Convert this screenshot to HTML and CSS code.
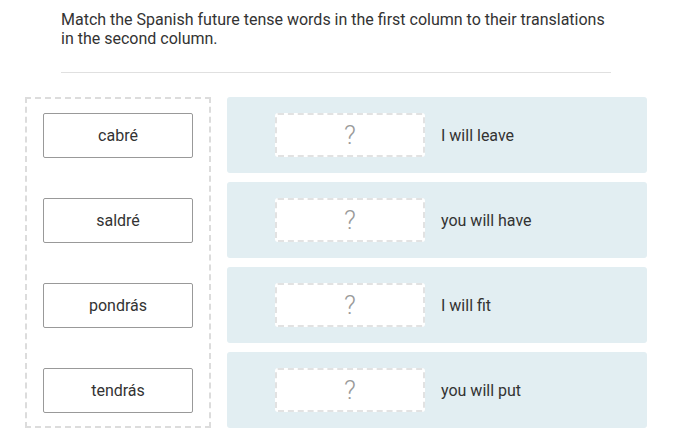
FILE: index.html
```html
<!DOCTYPE html>
<html lang="en">
  <head>
    <meta charset="UTF-8" />
    <meta name="viewport" content="width=device-width, initial-scale=1.0" />
    <title>Matching Question</title>
    <link rel="stylesheet" href="styles.css">
  </head>
  <body>
    <div class="question">
      <p class="prompt">
        Match the Spanish future tense words in the first column to their translations
        in the second column.
      </p>
      <hr class="divider" />
    </div>

    <div class="match-area">
      <div class="word-bank">
        <div class="word-card">cabré</div>
        <div class="word-card">saldré</div>
        <div class="word-card">pondrás</div>
        <div class="word-card">tendrás</div>
      </div>

      <ul class="target-list">
        <li class="target-row">
          <div class="drop-zone">?</div>
          <span class="target-label">I will leave</span>
        </li>
        <li class="target-row">
          <div class="drop-zone">?</div>
          <span class="target-label">you will have</span>
        </li>
        <li class="target-row">
          <div class="drop-zone">?</div>
          <span class="target-label">I will fit</span>
        </li>
        <li class="target-row">
          <div class="drop-zone">?</div>
          <span class="target-label">you will put</span>
        </li>
      </ul>
    </div>
  </body>
</html>
```

FILE: styles.css
```css
body {
  font-family: Roboto, "Liberation Sans", sans-serif;
  background-color: #fff;
  color: #333;
  margin: 0;
}

.question {
  padding: 10px 65px 0 61px;
}

.prompt {
  margin: 0;
  font-size: 16px;
  line-height: 19px;
}

.divider {
  border: none;
  border-top: 1px solid #e0e0e0;
  margin: 24px 0 0;
}

.match-area {
  display: flex;
  align-items: flex-start;
  gap: 16px;
  padding: 24px 0 0 25px;
}

.word-bank {
  display: flex;
  flex-direction: column;
  gap: 40px;
  width: 150px;
  padding: 14px 16px 13px;
  border: 2px dashed #dcdcdc;
}

.word-card {
  height: 43px;
  display: flex;
  align-items: center;
  justify-content: center;
  border: 1px solid #999;
  border-radius: 2px;
  font-size: 16px;
  color: #333;
  background-color: #fff;
}

.target-list {
  list-style: none;
  margin: 0;
  padding: 0;
  width: 420px;
  display: flex;
  flex-direction: column;
  gap: 9px;
}

.target-row {
  height: 76px;
  display: flex;
  align-items: center;
  gap: 16px;
  padding-left: 48px;
  background-color: #e2eef2;
  border-radius: 3px;
}

.drop-zone {
  width: 146px;
  height: 40px;
  display: flex;
  align-items: center;
  justify-content: center;
  background-color: #fff;
  border: 2px dashed #e2e2e2;
  border-radius: 3px;
  font-size: 26px;
  font-weight: 300;
  color: #9a9a9a;
}

.target-label {
  font-size: 16px;
  color: #333;
}
```
